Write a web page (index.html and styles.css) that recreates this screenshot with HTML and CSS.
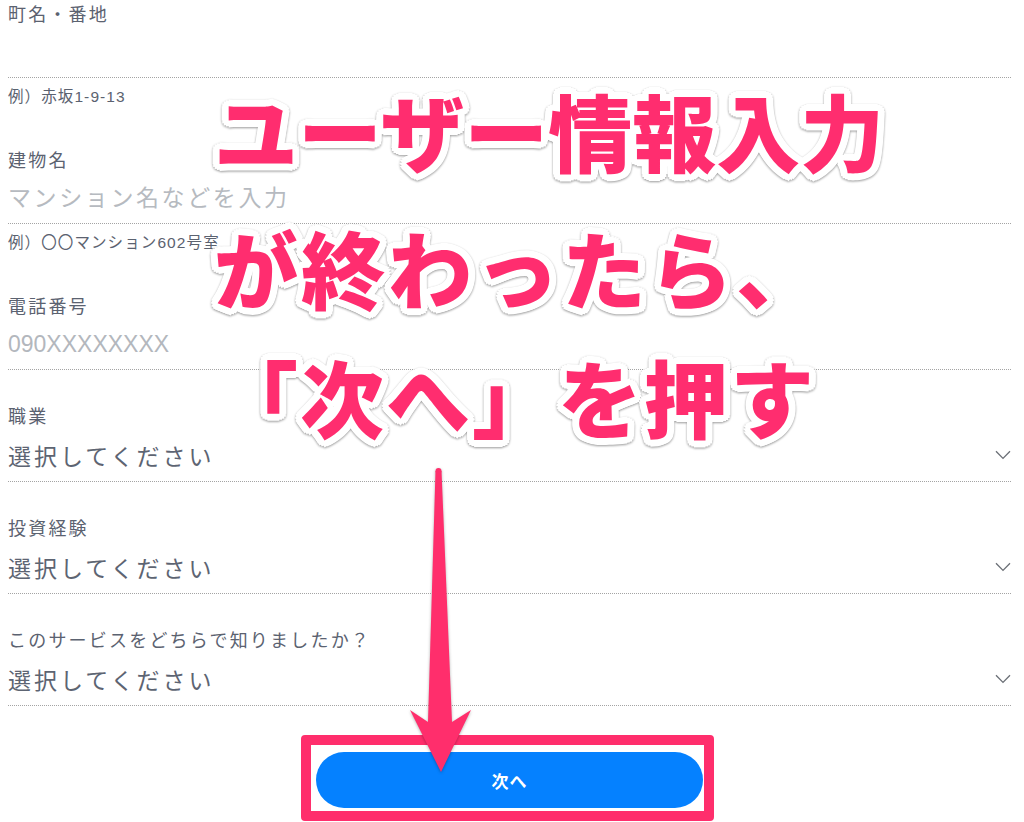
FILE: index.html
```html
<!DOCTYPE html>
<html lang="ja">
<head>
<meta charset="utf-8">
<title>ユーザー情報入力</title>
<link rel="stylesheet" href="styles.css">
</head>
<body>
<main class="page">
  <form class="form">
    <div class="field with-hint">
      <label class="label">町名・番地</label>
      <input class="input" type="text">
      <p class="hint">例）赤坂1-9-13</p>
    </div>
    <div class="field with-hint">
      <label class="label">建物名</label>
      <input class="input" type="text" placeholder="マンション名などを入力">
      <p class="hint">例）〇〇マンション602号室</p>
    </div>
    <div class="field">
      <label class="label">電話番号</label>
      <input class="input input-tel" type="tel" placeholder="090XXXXXXXX">
    </div>
    <div class="field">
      <label class="label">職業</label>
      <div class="select"><span class="select-value">選択してください</span><svg class="chevron" width="16" height="10" viewBox="0 0 16 10"><path d="M1 1.2 L8 8.4 L15 1.2" fill="none" stroke="#6b6f76" stroke-width="1.3"/></svg></div>
    </div>
    <div class="field">
      <label class="label">投資経験</label>
      <div class="select"><span class="select-value">選択してください</span><svg class="chevron" width="16" height="10" viewBox="0 0 16 10"><path d="M1 1.2 L8 8.4 L15 1.2" fill="none" stroke="#6b6f76" stroke-width="1.3"/></svg></div>
    </div>
    <div class="field">
      <label class="label">このサービスをどちらで知りましたか？</label>
      <div class="select"><span class="select-value">選択してください</span><svg class="chevron" width="16" height="10" viewBox="0 0 16 10"><path d="M1 1.2 L8 8.4 L15 1.2" fill="none" stroke="#6b6f76" stroke-width="1.3"/></svg></div>
    </div>
    <button class="next-btn" type="button">次へ</button>
  </form>

  <div class="callout">
    <div class="callout-line line1">ユーザー情報入力</div>
    <div class="callout-line line2">が終わったら、</div>
    <div class="callout-line line3">「次へ」を押す</div>
  </div>

  <div class="highlight-box"></div>

  <svg class="arrow" width="1024" height="822" viewBox="0 0 1024 822">
    <circle cx="438.5" cy="471" r="3"/>
    <polygon points="435.5,471 441.5,471 452,722 471,710 441,772 410,710 428,722"/>
  </svg>
</main>
</body>
</html>
```
FILE: styles.css
```css
html, body {
  margin: 0;
  padding: 0;
  background: #ffffff;
}

body {
  font-family: "Liberation Sans", "Noto Sans CJK JP", sans-serif;
  color: #5b6270;
  width: 1024px;
  height: 822px;
  overflow: hidden;
}

.page {
  position: relative;
  width: 1024px;
  height: 822px;
}

.form {
  display: flex;
  flex-direction: column;
  padding: 3px 13px 0 8px;
}

.field {
  display: flex;
  flex-direction: column;
  margin-bottom: 35px;
}

.field.with-hint {
  margin-bottom: 42px;
}

.label {
  display: block;
  font-size: 18px;
  line-height: 24px;
  letter-spacing: 2.2px;
  color: #5b6270;
}

.input {
  display: block;
  box-sizing: border-box;
  width: 100%;
  height: 51px;
  margin: 0;
  padding: 0;
  border: none;
  border-bottom: 1px dotted #a4a4a4;
  background: transparent;
  outline: none;
  font-family: "Liberation Sans", "Noto Sans CJK JP", sans-serif;
  font-size: 23px;
  line-height: 50px;
  letter-spacing: 2.6px;
  color: #5b6270;
}

.input::placeholder {
  color: #b6bac0;
}

.input-tel {
  letter-spacing: 0;
}

.input-tel::placeholder {
  color: #b3b7bd;
}

.hint {
  margin: 9px 0 0 0;
  font-size: 15.5px;
  line-height: 20px;
  letter-spacing: 1.1px;
  color: #5b6270;
}

.select {
  box-sizing: border-box;
  height: 53px;
  padding-top: 4px;
  display: flex;
  align-items: center;
  justify-content: space-between;
  border-bottom: 1px dotted #a4a4a4;
}

.select-value {
  font-size: 23px;
  line-height: 48px;
  letter-spacing: 3px;
  color: #5d6472;
}

.chevron {
  margin-top: -4px;
  flex: none;
}

.next-btn {
  align-self: center;
  margin-top: 11px;
  width: 387px;
  height: 56px;
  border: none;
  border-radius: 28px;
  background: #0581ff;
  color: #ffffff;
  font-family: "Noto Sans CJK JP", sans-serif;
  font-weight: 700;
  font-size: 17px;
  letter-spacing: 1px;
  padding: 0;
}

/* annotation overlay */
.callout {
  position: absolute;
  left: 214px;
  top: 88px;
  font-family: "Noto Sans CJK JP", sans-serif;
  font-weight: 900;
  font-size: 84px;
  line-height: 84px;
  color: #ff2d6f;
  white-space: nowrap;
  filter: drop-shadow(0 1px 1.2px rgba(0, 0, 0, 0.4));
  text-shadow:
    7px 0 0.6px #fff, 6.47px 2.68px 0.6px #fff, 4.95px 4.95px 0.6px #fff, 2.68px 6.47px 0.6px #fff,
    0 7px 0.6px #fff, -2.68px 6.47px 0.6px #fff, -4.95px 4.95px 0.6px #fff, -6.47px 2.68px 0.6px #fff,
    -7px 0 0.6px #fff, -6.47px -2.68px 0.6px #fff, -4.95px -4.95px 0.6px #fff, -2.68px -6.47px 0.6px #fff,
    0 -7px 0.6px #fff, 2.68px -6.47px 0.6px #fff, 4.95px -4.95px 0.6px #fff, 6.47px -2.68px 0.6px #fff,
    4px 0 0 #fff, -4px 0 0 #fff, 0 4px 0 #fff, 0 -4px 0 #fff,
    3px 3px 0 #fff, -3px 3px 0 #fff, 3px -3px 0 #fff, -3px -3px 0 #fff;
}

.callout-line {
  display: block;
}

.line2 {
  margin-top: 53px;
  letter-spacing: 3px;
}

.line3 {
  margin-top: 45px;
  letter-spacing: 2px;
}

.highlight-box {
  position: absolute;
  left: 301px;
  top: 735px;
  width: 413px;
  height: 86px;
  box-sizing: border-box;
  border: 10px solid #ff2e6c;
  border-radius: 4px;
}

.arrow {
  position: absolute;
  left: 0;
  top: 0;
  fill: #ff2e6c;
  filter: drop-shadow(0 1px 1.5px rgba(0, 0, 0, 0.3));
  pointer-events: none;
}
```
